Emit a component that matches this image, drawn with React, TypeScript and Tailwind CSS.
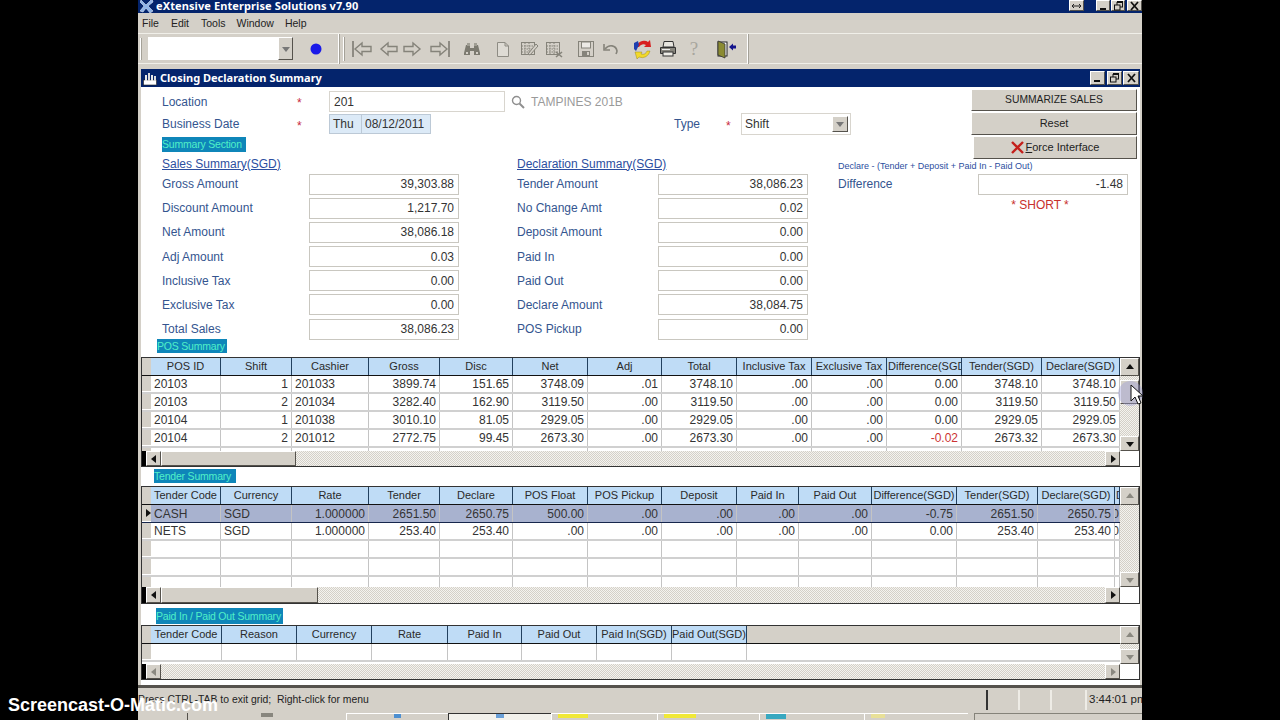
import React from 'react';

const posCols = 'grid-cols-[70px_71px_77px_71px_73px_75px_74px_75px_75px_75px_75px_80px_78px]';
const tenderCols = 'grid-cols-[70px_71px_77px_71px_73px_75px_74px_75px_62px_73px_85px_81px_77px_5px]';
const paidCols = 'grid-cols-[71px_75px_75px_76px_74px_75px_75px_75px]';

const posHeaders = ['POS ID', 'Shift', 'Cashier', 'Gross', 'Disc', 'Net', 'Adj', 'Total', 'Inclusive Tax', 'Exclusive Tax', 'Difference(SGD', 'Tender(SGD)', 'Declare(SGD)'];
const posAlign = 'lrlrrrrrrrrrr';
const posRows = [
  ['20103', '1', '201033', '3899.74', '151.65', '3748.09', '.01', '3748.10', '.00', '.00', '0.00', '3748.10', '3748.10'],
  ['20103', '2', '201034', '3282.40', '162.90', '3119.50', '.00', '3119.50', '.00', '.00', '0.00', '3119.50', '3119.50'],
  ['20104', '1', '201038', '3010.10', '81.05', '2929.05', '.00', '2929.05', '.00', '.00', '0.00', '2929.05', '2929.05'],
  ['20104', '2', '201012', '2772.75', '99.45', '2673.30', '.00', '2673.30', '.00', '.00', '-0.02', '2673.32', '2673.30'],
  ['', '', '', '', '', '', '', '', '', '', '', '', ''],
];

const tenderHeaders = ['Tender Code', 'Currency', 'Rate', 'Tender', 'Declare', 'POS Float', 'POS Pickup', 'Deposit', 'Paid In', 'Paid Out', 'Difference(SGD)', 'Tender(SGD)', 'Declare(SGD)', 'D'];
const tenderAlign = 'llrrrrrrrrrrrc';
const tenderRows = [
  ['CASH', 'SGD', '1.000000', '2651.50', '2650.75', '500.00', '.00', '.00', '.00', '.00', '-0.75', '2651.50', '2650.75', '0'],
  ['NETS', 'SGD', '1.000000', '253.40', '253.40', '.00', '.00', '.00', '.00', '.00', '0.00', '253.40', '253.40', '0'],
  ['', '', '', '', '', '', '', '', '', '', '', '', '', ''],
  ['', '', '', '', '', '', '', '', '', '', '', '', '', ''],
  ['', '', '', '', '', '', '', '', '', '', '', '', '', ''],
];

const paidHeaders = ['Tender Code', 'Reason', 'Currency', 'Rate', 'Paid In', 'Paid Out', 'Paid In(SGD)', 'Paid Out(SGD)'];

const salesRows = [
  ['Gross Amount', '39,303.88'],
  ['Discount Amount', '1,217.70'],
  ['Net Amount', '38,086.18'],
  ['Adj Amount', '0.03'],
  ['Inclusive Tax', '0.00'],
  ['Exclusive Tax', '0.00'],
  ['Total Sales', '38,086.23'],
];

const declareRows = [
  ['Tender Amount', '38,086.23'],
  ['No Change Amt', '0.02'],
  ['Deposit Amount', '0.00'],
  ['Paid In', '0.00'],
  ['Paid Out', '0.00'],
  ['Declare Amount', '38,084.75'],
  ['POS Pickup', '0.00'],
];

const dither = 'bg-[repeating-conic-gradient(#d4d0c8_0_25%,#f4f3ef_0_50%)] bg-[length:2px_2px]';
const raised = 'border border-t-white border-l-white border-r-[#55524c] border-b-[#55524c] bg-[#d4d0c8]';

function Tri({ dir, color = '#111' }: { dir: 'up' | 'down' | 'left' | 'right'; color?: string }) {
  const pts = { up: '4,1 8,6 0,6', down: '0,2 8,2 4,7', left: '6,0 6,8 1,4', right: '2,0 2,8 7,4' }[dir];
  return (
    <svg width="8" height="8" viewBox="0 0 8 8">
      <polygon points={pts} fill={color} />
    </svg>
  );
}

function ScrollBtn({ dir, color, className }: { dir: 'up' | 'down' | 'left' | 'right'; color?: string; className: string }) {
  return (
    <div className={`${raised} flex items-center justify-center shrink-0 ${className}`}>
      <Tri dir={dir} color={color} />
    </div>
  );
}

function WinBtn({ kind, className }: { kind: 'min' | 'max' | 'close' | 'size'; className: string }) {
  return (
    <div className={`${raised} flex items-center justify-center ${className}`}>
      <svg width="11" height="10" viewBox="0 0 11 10">
        {kind === 'min' && <rect x="2" y="7" width="6" height="2" fill="#111" />}
        {kind === 'max' && (
          <g fill="none" stroke="#111">
            <rect x="4" y="1.5" width="5.5" height="4.5" />
            <rect x="1.5" y="4" width="5.5" height="5" fill="#d4d0c8" />
            <line x1="4" y1="1" x2="10" y2="1" strokeWidth="2" />
          </g>
        )}
        {kind === 'close' && <path d="M2 1 L9 9 M9 1 L2 9" stroke="#111" strokeWidth="1.8" />}
        {kind === 'size' && <path d="M1 5 H10 M3 3 L1 5 L3 7 M8 3 L10 5 L8 7" fill="none" stroke="#222" />}
      </svg>
    </div>
  );
}

function NavArrow({ flip, bar }: { flip?: boolean; bar?: boolean }) {
  return (
    <svg width="20" height="20" viewBox="0 0 20 20" className={flip ? '-scale-x-100' : ''}>
      {bar && <line x1="1" y1="2" x2="1" y2="18" stroke="#77756c" strokeWidth="1.5" />}
      <path d="M19 7.5 H10 V4 L3 10 L10 16 V12.5 H19 Z" fill="#d4d0c8" stroke="#85837a" strokeWidth="1.4" />
    </svg>
  );
}

function Binoculars() {
  return (
    <svg width="20" height="20" viewBox="0 0 20 20">
      <path d="M4 6 H8 V9 H12 V6 H16 L18 14 V16 H12 V12 H8 V16 H2 V14 Z" fill="#7c7a70" />
      <rect x="5" y="4" width="3" height="3" fill="#a09e94" />
      <rect x="12" y="4" width="3" height="3" fill="#a09e94" />
      <rect x="4" y="13" width="2" height="2" fill="#d4d0c8" />
      <rect x="14" y="13" width="2" height="2" fill="#d4d0c8" />
    </svg>
  );
}

function Doc() {
  return (
    <svg width="20" height="20" viewBox="0 0 20 20">
      <path d="M4.5 3.5 H12 L15.5 7 V17.5 H4.5 Z M12 3.5 V7 H15.5" fill="#dedbd4" stroke="#8e8c84" />
    </svg>
  );
}

function Pad({ cross }: { cross?: boolean }) {
  return (
    <svg width="20" height="20" viewBox="0 0 20 20" fill="none" stroke="#85837a">
      <rect x="2.5" y="3.5" width="13" height="12" />
      <path d="M2.5 7 H15.5 M2.5 10 H15.5 M2.5 13 H15.5 M6 3.5 V15.5 M10 3.5 V15.5" strokeDasharray="1.5 1" />
      {cross ? <path d="M12 13 L18 18 M18 13 L12 18" strokeWidth="1.6" /> : <path d="M9 15 L17 5 L19 7 L11 16 Z" fill="#d4d0c8" />}
    </svg>
  );
}

function Save() {
  return (
    <svg width="20" height="20" viewBox="0 0 20 20">
      <rect x="2.5" y="2.5" width="15" height="15" fill="#d4d0c8" stroke="#85837a" />
      <rect x="5.5" y="3" width="9" height="6" fill="#eceae5" stroke="#85837a" />
      <rect x="6" y="12" width="8" height="5" fill="#85837a" />
      <rect x="11" y="13" width="2" height="3" fill="#d4d0c8" />
    </svg>
  );
}

function Undo() {
  return (
    <svg width="20" height="20" viewBox="0 0 20 20" fill="none" stroke="#85837a" strokeWidth="1.6">
      <path d="M4 10 C8 5 15 6 16 12 C16 13 15.5 14 15 15" />
      <path d="M3 5 V11 H9" />
    </svg>
  );
}

function Refresh() {
  return (
    <svg width="20" height="22" viewBox="0 0 20 22">
      <path d="M3 9 A8 8 0 0 1 15 4 L17 2 L18 9 L11 9 L13 7 A5 5 0 0 0 6 9 Z" fill="#d81e1e" />
      <path d="M17 13 A8 8 0 0 1 6 19 L4 21 L2 14 L9 14 L8 16 A5 5 0 0 0 14 13 Z" fill="#f2d92a" stroke="#8a7a10" strokeWidth="0.4" />
      <path d="M1 5 L5 3 L6 7 L3 13 L1 11 Z" fill="#1f3fb0" />
    </svg>
  );
}

function Printer() {
  return (
    <svg width="20" height="20" viewBox="0 0 20 20">
      <path d="M6 2.5 H15 L16 8 H5 Z" fill="#e8e6e0" stroke="#333" />
      <path d="M2.5 8.5 H17.5 V14.5 H2.5 Z" fill="#88867e" stroke="#333" />
      <rect x="5" y="13" width="10" height="4" fill="#eeece6" stroke="#333" />
      <line x1="4" y1="10.5" x2="12" y2="10.5" stroke="#eee" />
    </svg>
  );
}

function ExitDoor() {
  return (
    <svg width="20" height="20" viewBox="0 0 20 20">
      <rect x="2" y="3" width="9" height="14" fill="#fff" stroke="#222" />
      <path d="M2 2 L9 5 V19 L2 16 Z" fill="#8b8b32" stroke="#333" strokeWidth="0.8" />
      <path d="M13 8 L17 4.5 V6.5 H20 V9.5 H17 V11.5 Z" fill="#14148c" />
    </svg>
  );
}

function Logo() {
  return (
    <svg width="14" height="14" viewBox="0 0 14 14">
      <path d="M1 1 L6 6 L12 0 L13 3 L8 7 L13 12 L10 14 L6 9 L3 13 L0 12 L4 7 L0 3 Z" fill="#8fb4e8" stroke="#dfeaf8" strokeWidth="0.6" />
    </svg>
  );
}

function ChildIcon() {
  return (
    <svg width="15" height="15" viewBox="0 0 15 15">
      <rect x="0.5" y="9" width="13" height="5" fill="#fff" stroke="#222" strokeWidth="0.6" />
      <rect x="2" y="4" width="2" height="6" fill="#e8e8e8" />
      <rect x="5" y="2" width="2" height="8" fill="#ddd" />
      <rect x="8" y="4" width="2" height="6" fill="#e8e8e8" />
      <rect x="11" y="5" width="2" height="5" fill="#ddd" />
    </svg>
  );
}

function Chip({ children, className }: { children: React.ReactNode; className: string }) {
  return (
    <div className={`bg-[#0f86b9] text-[#4ff0c8] text-[10.5px] tracking-[-0.2px] leading-none flex items-center whitespace-nowrap overflow-hidden ${className}`}>
      {children}
    </div>
  );
}

function Amount({ value, className = '' }: { value: string; className?: string }) {
  return (
    <div className={`w-[150px] h-[21px] border border-[#c9c7c0] bg-white flex items-center justify-end pr-[4px] text-[12px] text-[#333] ${className}`}>
      {value}
    </div>
  );
}

function AmountRow({ label, value, labelWidth }: { label: string; value: string; labelWidth: string }) {
  return (
    <div className="h-[24.17px] flex items-center">
      <div className={`${labelWidth} text-[12px] text-[#34558f]`}>{label}</div>
      <Amount value={value} />
    </div>
  );
}

function Star({ className }: { className: string }) {
  return <div className={`text-[12px] text-[#c8283c] leading-none pt-[3px] ${className}`}>*</div>;
}

function HeaderCell({ text, clipLeft }: { text: string; clipLeft?: boolean }) {
  return (
    <div className={`h-full bg-[#bfdcf6] border-r border-[#22405f] flex items-center overflow-hidden whitespace-nowrap text-[11px] text-[#2a2a2a] ${clipLeft ? 'justify-start pl-[1px]' : 'justify-center'}`}>
      {text}
    </div>
  );
}

function DataCell({ text, align, red }: { text: string; align: string; red?: boolean }) {
  const pos = align === 'l' ? 'justify-start pl-[3px]' : align === 'c' ? 'justify-end' : 'justify-end pr-[3px]';
  return (
    <div className={`h-full border-r border-[#c4c4c4] flex items-center overflow-hidden whitespace-nowrap text-[12px] ${pos} ${red ? 'text-[#cc3333]' : 'text-[#333]'}`}>
      {text}
    </div>
  );
}

function RowHead({ marker }: { marker?: boolean }) {
  return (
    <div className="w-[9px] h-full shrink-0 bg-[#d4d0c8] border-b border-white flex items-center justify-end overflow-hidden">
      {marker && (
        <svg width="5" height="8" viewBox="0 0 5 8">
          <polygon points="0,0 5,4 0,8" fill="#111" />
        </svg>
      )}
    </div>
  );
}

function HScroll({ thumb, arrows, height }: { thumb: string; arrows?: string; height: string }) {
  return (
    <div className={`flex shrink-0 ${height} ${dither}`}>
      <div className="w-[4px] bg-black shrink-0" />
      <ScrollBtn dir="left" color={arrows} className="w-[15px]" />
      {thumb && <div className={`${raised} ${thumb}`} />}
      <div className="flex-1" />
      <ScrollBtn dir="right" color={arrows} className="w-[15px]" />
    </div>
  );
}

function VScroll({ upH, downH, cornerH, arrows, thumb }: { upH: string; downH: string; cornerH: string; arrows?: string; thumb?: boolean }) {
  return (
    <div className="w-[19px] flex flex-col shrink-0 bg-white">
      <ScrollBtn dir="up" color={arrows} className={upH} />
      <div className={`flex-1 ${dither}`}>
        {thumb && <div className={`${raised} h-[24px] mt-[4px]`} />}
      </div>
      <ScrollBtn dir="down" color={arrows} className={downH} />
      <div className={`${cornerH} bg-white shrink-0`} />
    </div>
  );
}

function Page() {
  return (
    <div className="w-[1004px] h-[720px] ml-[138px] flex flex-col bg-[#d4d0c8] overflow-hidden">
      {/* main window title */}
      <div className="h-[14px] shrink-0 bg-[#04246c] flex items-center pl-[2px] pb-[2px] border-b border-[#d4d0c8] text-white">
        <Logo />
        <div className="ml-[2px] font-['Noto_Sans',sans-serif] font-bold text-[11px] tracking-[0.1px] leading-none whitespace-nowrap">eXtensive Enterprise Solutions v7.90</div>
        <WinBtn kind="size" className="ml-auto w-[15px] h-[11px]" />
        <WinBtn kind="min" className="ml-[12px] w-[14px] h-[11px]" />
        <WinBtn kind="max" className="ml-[1px] w-[14px] h-[11px]" />
        <WinBtn kind="close" className="ml-[2px] w-[15px] h-[11px]" />
      </div>

      {/* menu */}
      <div className="h-[19px] shrink-0 flex items-center pl-[4px] text-[10.5px] text-[#222]">
        <span>File</span>
        <span className="ml-[12px]">Edit</span>
        <span className="ml-[12px]">Tools</span>
        <span className="ml-[11px]">Window</span>
        <span className="ml-[11px]">Help</span>
      </div>

      {/* toolbar */}
      <div className="h-[31px] shrink-0 flex items-center border-y border-[#f0efe9]">
        <div className="w-[2px] h-[22px] ml-[2px] bg-[#a4a198] border-l border-white" />
        <div className="w-[130px] h-[23px] ml-[6px] bg-white" />
        <div className={`${raised} w-[15px] h-[23px] flex items-center justify-center`}>
          <Tri dir="down" color="#777" />
        </div>
        <svg width="12" height="12" viewBox="0 0 12 12" className="ml-[17px]">
          <circle cx="6" cy="6" r="5.5" fill="#1a1ae8" />
        </svg>
        <div className="w-[2px] h-[30px] ml-[16px] bg-[#a4a198] border-l border-white" />
        <div className="w-[2px] h-[24px] ml-[3px] bg-[#a4a198] border-l border-white" />
        <div className="flex items-center ml-[7px]">
          <NavArrow bar />
          <div className="ml-[6px]"><NavArrow /></div>
          <div className="ml-[5px]"><NavArrow flip /></div>
          <div className="ml-[7px]"><NavArrow flip bar /></div>
          <div className="ml-[12px]"><Binoculars /></div>
          <div className="ml-[11px]"><Doc /></div>
          <div className="ml-[6px]"><Pad /></div>
          <div className="ml-[5px]"><Pad cross /></div>
          <div className="ml-[12px]"><Save /></div>
          <div className="ml-[5px]"><Undo /></div>
          <div className="ml-[12px]"><Refresh /></div>
          <div className="ml-[5px]"><Printer /></div>
          <div className="ml-[6px] w-[20px] text-center text-[19px] leading-none text-[#a8a69e] font-['Liberation_Serif',serif]">?</div>
          <div className="ml-[12px]"><ExitDoor /></div>
        </div>
        <div className="w-[2px] h-[30px] ml-[11px] bg-[#a4a198] border-l border-white" />
      </div>
      <div className="h-[5px] shrink-0" />

      {/* child window */}
      <div className="h-[616px] shrink-0 flex flex-col border-l-[3px] border-r-[2px] border-[#d4d0c8] bg-white">
        <div className="h-[18px] shrink-0 bg-[#04246c] flex items-center pl-[2px] pr-[1px] text-white">
          <ChildIcon />
          <div className="ml-[2px] pb-[2px] font-['Noto_Sans',sans-serif] font-bold text-[11px] leading-none whitespace-nowrap">Closing Declaration Summary</div>
          <WinBtn kind="min" className="ml-auto w-[15px] h-[14px]" />
          <WinBtn kind="max" className="ml-[2px] w-[15px] h-[14px]" />
          <WinBtn kind="close" className="ml-[1px] w-[16px] h-[14px]" />
        </div>

        {/* top fields and buttons */}
        <div className="h-[70px] shrink-0 flex">
          <div className="w-[830px] shrink-0 pt-[4px]">
            <div className="flex items-center h-[21px]">
              <div className="w-[135px] pl-[21px] shrink-0 box-content text-[12px] text-[#34558f]">Location</div>
              <Star className="w-[32px]" />
              <div className="w-[176px] h-[21px] border border-[#d8d5ce] flex items-center pl-[4px] text-[12px] text-[#333]">201</div>
              <svg width="14" height="14" viewBox="0 0 14 14" className="ml-[6px]" fill="none" stroke="#8f8f8f" strokeWidth="1.4">
                <circle cx="5.5" cy="5.5" r="4" />
                <path d="M8.5 8.5 L13 13" strokeWidth="2" />
              </svg>
              <div className="ml-[6px] text-[12px] text-[#9a9a9a]">TAMPINES 201B</div>
            </div>
            <div className="flex items-center h-[20px] mt-[2px]">
              <div className="w-[135px] pl-[21px] shrink-0 box-content text-[12px] text-[#34558f]">Business Date</div>
              <Star className="w-[32px]" />
              <div className="w-[102px] h-[20px] flex border border-[#bcc9d6] bg-[#dceaf7] text-[12px] text-[#333]">
                <div className="w-[32px] border-r border-[#bcc9d6] flex items-center pl-[3px]">Thu</div>
                <div className="flex-1 flex items-center pl-[3px]">08/12/2011</div>
              </div>
              <div className="ml-[243px] w-[52px] text-[12px] text-[#34558f]">Type</div>
              <Star className="w-[15px]" />
              <div className="w-[110px] h-[22px] border border-[#d8d5ce] flex items-center justify-between pl-[3px] pr-[2px] text-[12px] text-[#333]">
                Shift
                <div className={`${raised} w-[16px] h-[16px] flex items-center justify-center`}>
                  <Tri dir="down" color="#777" />
                </div>
              </div>
            </div>
            <Chip className="ml-[21px] mt-[3px] w-[84px] h-[15px]">Summary Section</Chip>
          </div>
          <div className="flex-1 pt-[2px] text-[11px] text-[#222]">
            <div className={`${raised} w-[166px] h-[22px] flex items-center justify-center text-[10.3px]`}>SUMMARIZE SALES</div>
            <div className={`${raised} w-[166px] h-[23px] mt-[1px] flex items-center justify-center`}>Reset</div>
            <div className={`${raised} w-[164px] h-[23px] ml-[2px] mt-[1px] flex items-center justify-center relative z-10`}>
              <svg width="13" height="13" viewBox="0 0 13 13" className="mr-[2px]">
                <path d="M1 1 L12 12 M12 1 L1 12" stroke="#c4201c" strokeWidth="2.4" />
              </svg>
              <span><span className="underline">F</span>orce Interface</span>
            </div>
          </div>
        </div>

        {/* amounts */}
        <div className="grid grid-cols-[376px_321px_1fr] shrink-0">
          <div className="pl-[21px]">
            <div className="h-[15px] pb-[2px] flex items-center text-[12px] text-[#2c4ea0] underline">Sales Summary(SGD)</div>
            {salesRows.map(([label, value]) => (
              <AmountRow key={label} label={label} value={value} labelWidth="w-[147px]" />
            ))}
          </div>
          <div>
            <div className="h-[15px] pb-[2px] flex items-center text-[12px] text-[#2c4ea0] underline">Declaration Summary(SGD)</div>
            {declareRows.map(([label, value]) => (
              <AmountRow key={label} label={label} value={value} labelWidth="w-[141px]" />
            ))}
          </div>
          <div>
            <div className="h-[15px] pt-[3px] text-[9px] leading-[12px] text-[#2c4ea0] whitespace-nowrap">Declare - (Tender + Deposit + Paid In - Paid Out)</div>
            <AmountRow label="Difference" value="-1.48" labelWidth="w-[140px]" />
            <div className="ml-[140px] w-[124px] text-center text-[12px] text-[#c8302c]">* SHORT *</div>
          </div>
        </div>

        {/* POS summary */}
        <Chip className="ml-[16px] -mt-[2px] mb-[4px] w-[70px] h-[14px] shrink-0">POS Summary</Chip>
        <div className="h-[110px] shrink-0 border border-[#333] flex">
          <div className="w-[978px] flex flex-col shrink-0">
            <div className="h-[18px] flex shrink-0 border-b border-[#111]">
              <div className="w-[9px] shrink-0 bg-[#d4d0c8]" />
              <div className={`grid flex-1 ${posCols}`}>
                {posHeaders.map((h) => <HeaderCell key={h} text={h} clipLeft={h === 'Difference(SGD'} />)}
              </div>
            </div>
            <div className="flex-1 overflow-hidden">
              {posRows.map((row, r) => (
                <div key={r} className="h-[18px] flex border-b-2 border-[#d0d0d0]">
                  <RowHead />
                  <div className={`grid flex-1 ${posCols}`}>
                    {row.map((c, i) => <DataCell key={i} text={c} align={posAlign[i]} red={c === '-0.02'} />)}
                  </div>
                </div>
              ))}
            </div>
            <HScroll thumb="w-[135px]" height="h-[15px]" />
          </div>
          <VScroll upH="h-[18px]" downH="h-[15px]" cornerH="h-[15px]" thumb />
        </div>

        {/* tender summary */}
        <Chip className="ml-[13px] mt-[2px] mb-[3px] w-[82px] h-[14px] shrink-0">Tender Summary</Chip>
        <div className="h-[118px] shrink-0 border border-[#333] flex">
          <div className="w-[978px] flex flex-col shrink-0">
            <div className="h-[18px] flex shrink-0 border-b border-[#111]">
              <div className="w-[9px] shrink-0 bg-[#d4d0c8]" />
              <div className={`grid flex-1 ${tenderCols}`}>
                {tenderHeaders.map((h) => <HeaderCell key={h} text={h} clipLeft={h === 'D'} />)}
              </div>
            </div>
            <div className="flex-1 overflow-hidden">
              {tenderRows.map((row, r) => (
                <div key={r} className={`h-[18px] flex ${r === 0 ? 'border-b border-[#16264c]' : 'border-b-2 border-[#d0d0d0]'}`}>
                  <RowHead marker={r === 0} />
                  <div className={`grid flex-1 ${tenderCols} ${r === 0 ? 'bg-[#a8b2cf]' : ''}`}>
                    {row.map((c, i) => <DataCell key={i} text={c} align={tenderAlign[i]} />)}
                  </div>
                </div>
              ))}
            </div>
            <HScroll thumb="w-[157px]" height="h-[16px]" />
          </div>
          <VScroll upH="h-[18px]" downH="h-[15px]" cornerH="h-[16px]" arrows="#8a8880" />
        </div>

        {/* paid in / paid out summary */}
        <Chip className="ml-[15px] mt-[4px] mb-[1px] w-[127px] h-[16px] shrink-0">Paid In / Paid Out Summary</Chip>
        <div className="h-[55px] shrink-0 border border-[#333] flex">
          <div className="w-[978px] flex flex-col shrink-0">
            <div className="h-[18px] flex shrink-0 border-b border-[#111] bg-[#d4d0c8]">
              <div className="w-[9px] shrink-0" />
              <div className={`grid ${paidCols}`}>
                {paidHeaders.map((h) => <HeaderCell key={h} text={h} />)}
              </div>
            </div>
            <div className="flex-1 overflow-hidden">
              <div className="h-[18px] flex border-b-2 border-[#d0d0d0]">
                <RowHead />
                <div className={`grid ${paidCols}`}>
                  {paidHeaders.map((h) => <DataCell key={h} text="" align="l" />)}
                </div>
              </div>
            </div>
            <HScroll thumb="" arrows="#8a8880" height="h-[15px]" />
          </div>
          <VScroll upH="h-[18px]" downH="h-[15px]" cornerH="h-[15px]" arrows="#8a8880" />
        </div>
        <div className="flex-1" />
      </div>

      {/* status bar */}
      <div className="h-[27px] shrink-0 border-t-[3px] border-[#55524c] flex items-center text-[10.4px] text-[#222]">
        <div className="whitespace-pre">Press CTRL-TAB to exit grid;  Right-click for menu</div>
        <div className="ml-auto flex h-full py-[2px]">
          <div className="w-[32px] border-l-2 border-[#333]" />
          <div className="w-[32px] border-l-2 border-[#eeece6]" />
          <div className="w-[35px] border-l-2 border-[#eeece6]" />
          <div className="w-[57px] border-l-2 border-[#eeece6] flex items-center pl-[2px] text-[11.5px] whitespace-nowrap overflow-hidden">3:44:01 pm</div>
        </div>
      </div>

      {/* taskbar, cut off by the capture */}
      <div className="flex-1 flex pt-[1px] bg-[#d4d0c8]">
        <div className="w-[50px] border-r border-[#55524c]" />
        <div className="w-[158px] flex justify-center"><div className="w-[12px] h-[4px] bg-[#88867e]" /></div>
        <div className="w-[102px] border-t border-l border-white flex justify-center"><div className="w-[7px] h-[4px] bg-[#4d8fd0]" /></div>
        <div className="w-[103px] border-t border-l border-[#333] bg-[#f2f1ec] flex justify-center"><div className="w-[8px] h-[4px] bg-[#6aa0d8]" /></div>
        <div className="w-[106px] border-t border-l border-white pl-[6px]"><div className="w-[30px] h-[4px] bg-[#f0e838]" /></div>
        <div className="w-[102px] border-t border-l border-white pl-[6px]"><div className="w-[32px] h-[4px] bg-[#f0e838]" /></div>
        <div className="w-[105px] border-t border-l border-white pl-[6px]"><div className="w-[20px] h-[5px] bg-[#38a8c0]" /></div>
        <div className="w-[104px] border-t border-l border-white pl-[6px]"><div className="w-[14px] h-[4px] bg-[#e8e098]" /></div>
        <div className="flex-1 ml-[6px] border-t border-l border-[#85837a]" />
      </div>
    </div>
  );
}

export default function App() {
  return (
    <div className="relative w-[1280px] h-[720px] bg-black overflow-hidden font-['Liberation_Sans',sans-serif]">
      <Page />

      {/* mouse cursor with its highlight */}
      <div className="absolute left-[1118px] top-[381px] w-[25px] h-[25px] rounded-full bg-[#9a9ad8]/40" />
      <svg width="14" height="22" viewBox="0 0 14 22" className="absolute left-[1130px] top-[384px]">
        <path d="M1 1 V17 L5 13 L8 20 L11 19 L8 12 H13 Z" fill="#fff" stroke="#111" />
      </svg>

      {/* recorder watermark */}
      <div className="absolute left-[8px] top-[694px] text-[18px] leading-[22px] font-bold text-white whitespace-nowrap">Screencast-O-Matic.com</div>
    </div>
  );
}
